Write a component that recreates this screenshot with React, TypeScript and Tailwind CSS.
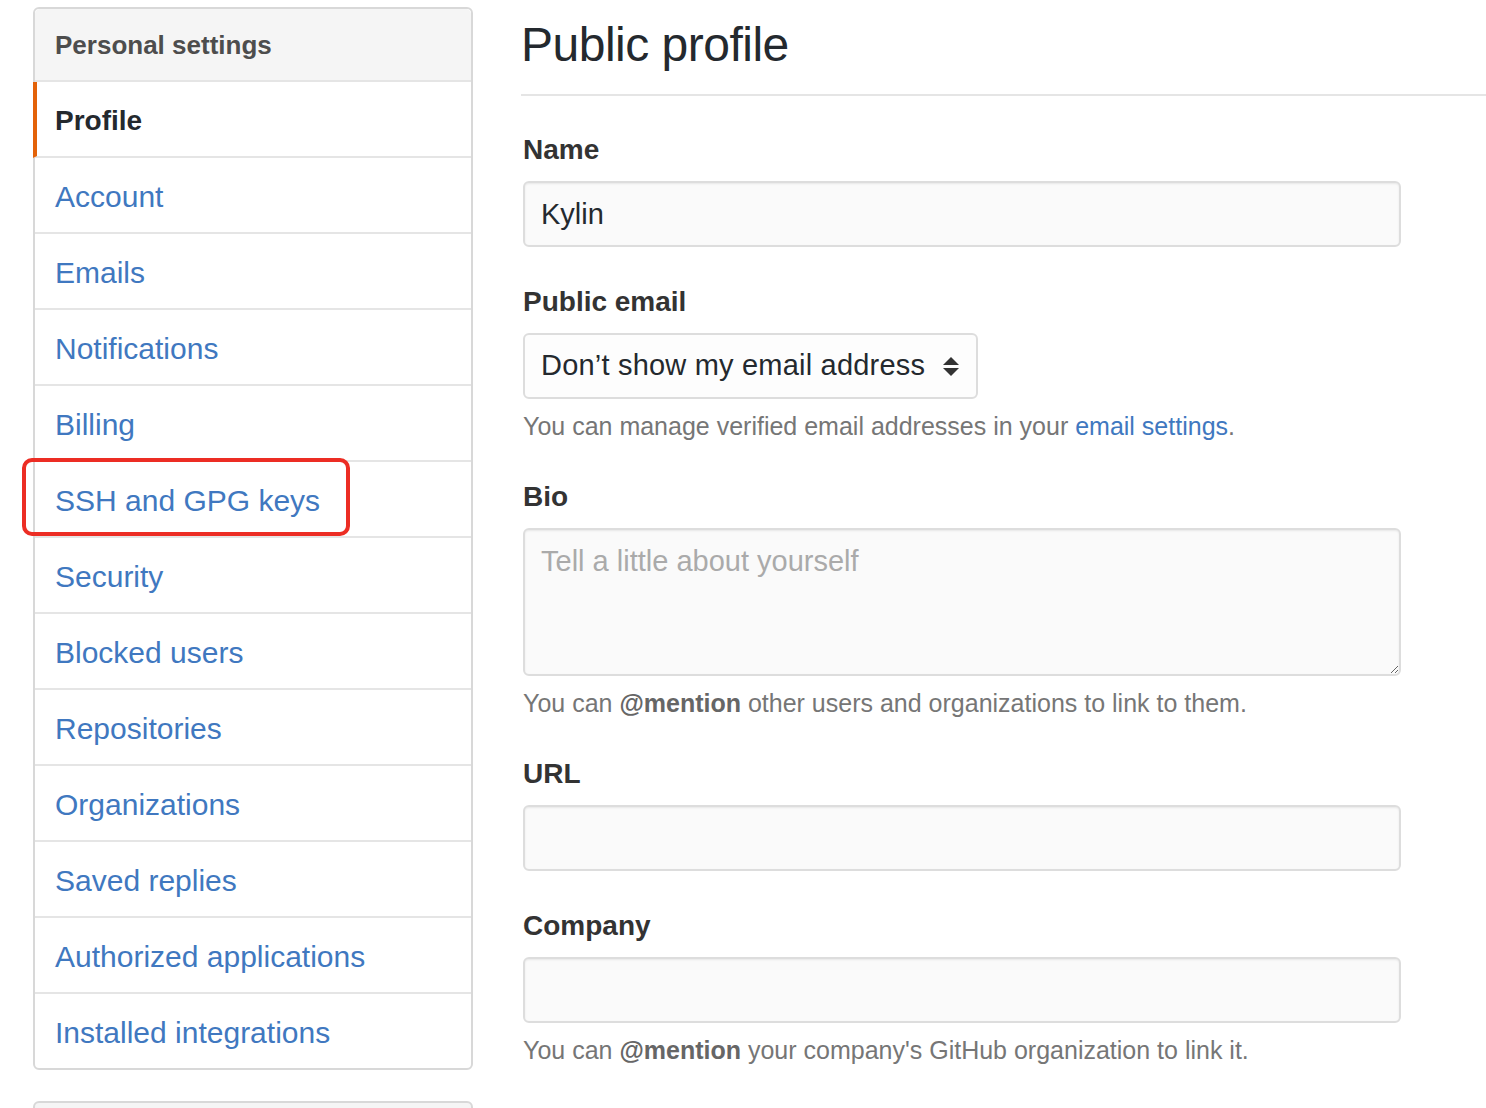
import React from "react";

const navItems = [
  "Account",
  "Emails",
  "Notifications",
  "Billing",
  "SSH and GPG keys",
  "Security",
  "Blocked users",
  "Repositories",
  "Organizations",
  "Saved replies",
  "Authorized applications",
  "Installed integrations",
];

const SelectArrows: React.FC = () => (
  <svg width="18" height="20" viewBox="0 0 18 20" className="shrink-0">
    <path d="M9 1 L17 9 H1 Z" fill="#333" />
    <path d="M1 12 H17 L9 20 Z" fill="#333" />
  </svg>
);

const Label: React.FC<{ children: React.ReactNode }> = ({ children }) => (
  <div className="text-[28px] leading-[36px] pt-[2px] h-[36px] font-bold text-[#333] mb-[15px]">{children}</div>
);

const Helper: React.FC<{ children: React.ReactNode }> = ({ children }) => (
  <p className="text-[25px] leading-[32px] mt-[11px] text-[#767676]">{children}</p>
);

const inputCls =
  "w-[878px] h-[66px] border-2 border-[#dddddd] rounded-[6px] bg-[#fafafa] px-[16px] text-[29px] text-[#24292e] outline-none shadow-[inset_0_1px_2px_rgba(0,0,0,0.075)]";

const Sidebar: React.FC = () => {
  return (
    <div className="w-[440px] shrink-0 pt-[7px] ml-[33px]">
      <div className="border-2 border-[#d8d8d8] rounded-[6px] bg-white">
        <div className="h-[73px] bg-[#f5f5f5] border-b-2 border-[#e5e5e5] rounded-t-[5px] flex items-center pl-[20px] pt-[2px] text-[26px] font-bold text-[#4d4d4d]">
          Personal settings
        </div>
        <div className="h-[76px] -ml-[2px] border-l-4 border-l-[#e36209] border-b-2 border-b-[#e5e5e5] flex items-center pl-[18px] pt-[3px] text-[28px] font-bold text-[#24292e]">
          Profile
        </div>
        {navItems.map((item, i) => (
          <div
            key={item}
            className={
              "relative flex items-center pl-[20px] pt-[3px] text-[30px] text-[#4078c0] " +
              (i === navItems.length - 1 ? "h-[74px]" : "h-[76px] border-b-2 border-[#e5e5e5]")
            }
          >
            {item}
            {item === "SSH and GPG keys" && (
              <div className="absolute left-[-13px] top-[-4px] w-[328px] h-[78px] border-4 border-[#ec2d24] rounded-[10px]" />
            )}
          </div>
        ))}
      </div>
      <div className="mt-[31px] h-[75px] border-2 border-[#d8d8d8] rounded-[6px] bg-[#f5f5f5]" />
    </div>
  );
};

const App: React.FC = () => {
  return (
    <div
      className="flex bg-white min-h-screen"
      style={{ fontFamily: '"Liberation Sans", Arial, sans-serif' }}
    >
      <Sidebar />
      <div className="flex-1 ml-[50px] pt-[17px]">
        <h1 className="text-[48px] leading-[56px] font-normal text-[#24292e] pb-[21px] border-b-2 border-[#e5e5e5] tracking-[-0.5px] -ml-[2px]">
          Public profile
        </h1>
        <div className="mt-[34px]">
          <Label>Name</Label>
          <input className={inputCls} defaultValue="Kylin" />
        </div>
        <div className="mt-[35px]">
          <Label>Public email</Label>
          <div className="w-[455px] h-[66px] border-2 border-[#dddddd] rounded-[6px] bg-[#fdfdfd] pl-[16px] pr-[16px] flex items-center justify-between text-[29px] text-[#24292e]">
            <span className="tracking-[0.2px]">Don’t show my email address</span>
            <SelectArrows />
          </div>
          <Helper>
            You can manage verified email addresses in your{" "}
            <a className="text-[#4078c0]">email settings</a>.
          </Helper>
        </div>
        <div className="mt-[35px]">
          <Label>Bio</Label>
          <textarea
            className="block w-[878px] h-[148px] border-2 border-[#dddddd] rounded-[6px] bg-[#fafafa] px-[16px] py-[13px] text-[29px] leading-[36px] text-[#24292e] placeholder:text-[#aaaaaa] outline-none shadow-[inset_0_1px_2px_rgba(0,0,0,0.075)]"
            placeholder="Tell a little about yourself"
          />
          <Helper>
            You can <b className="text-[#666]">@mention</b> other users and organizations to link to them.
          </Helper>
        </div>
        <div className="mt-[35px]">
          <Label>URL</Label>
          <input className={inputCls} />
        </div>
        <div className="mt-[35px]">
          <Label>Company</Label>
          <input className={inputCls} />
          <Helper>
            You can <b className="text-[#666]">@mention</b> your company's GitHub organization to link it.
          </Helper>
        </div>
      </div>
    </div>
  );
};

export default App;
